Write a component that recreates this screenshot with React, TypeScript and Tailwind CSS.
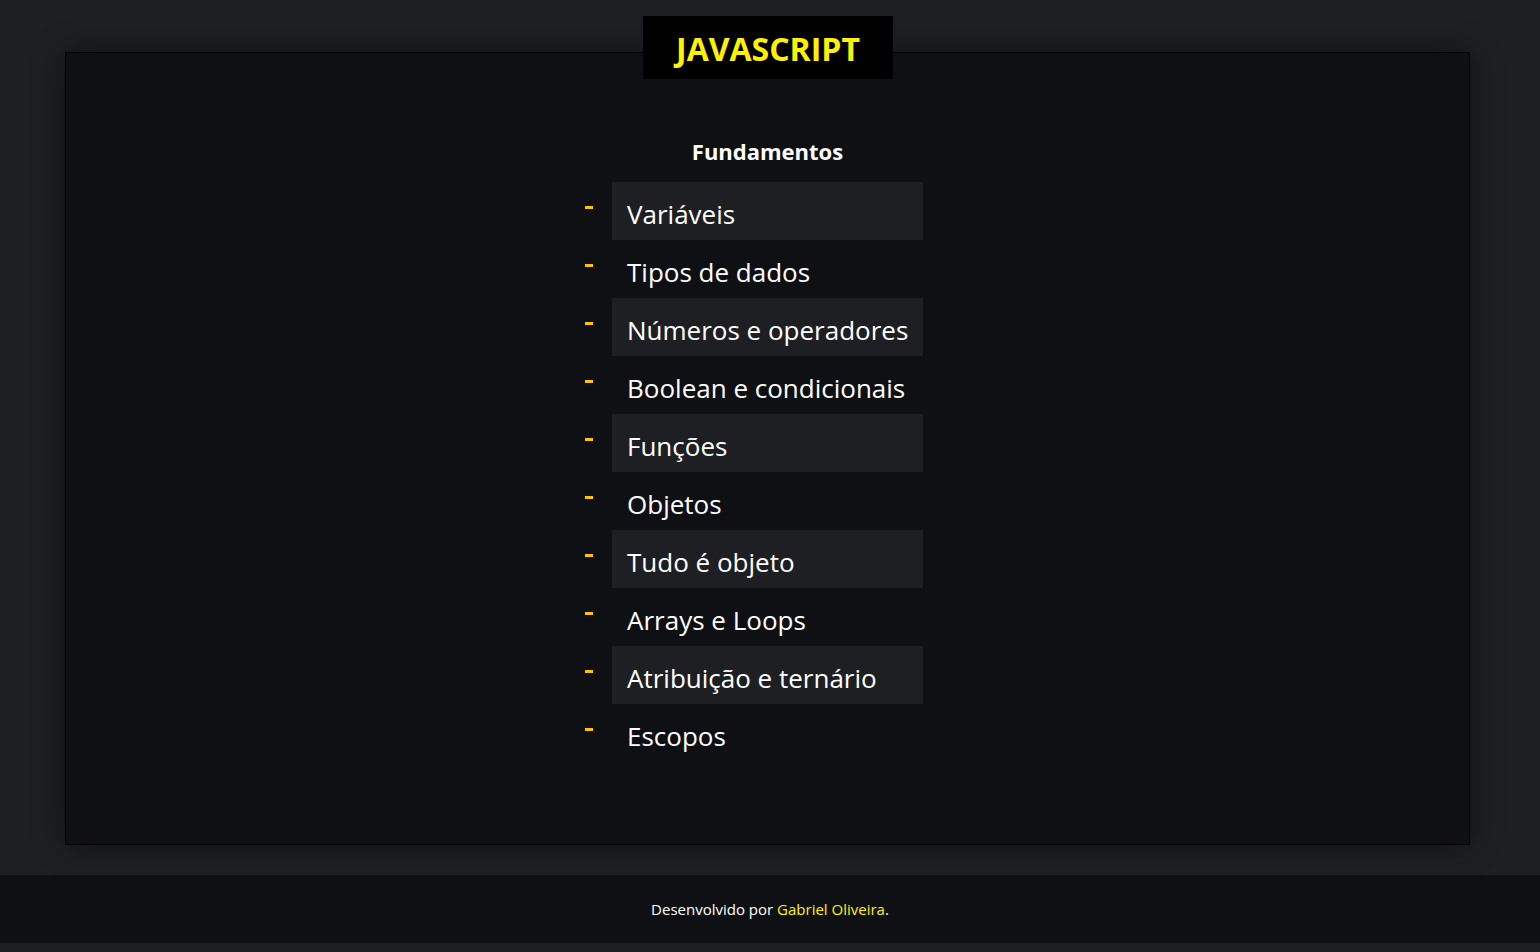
import React from "react";

const items = [
  "Variáveis",
  "Tipos de dados",
  "Números e operadores",
  "Boolean e condicionais",
  "Funções",
  "Objetos",
  "Tudo é objeto",
  "Arrays e Loops",
  "Atribuição e ternário",
  "Escopos",
];

export default function App() {
  return (
    <div
      className="min-h-[952px] bg-[#1e1f23] text-white"
      style={{ fontFamily: '"Open Sans", "Noto Sans", sans-serif' }}
    >
      <div className="pt-[16px]">
        <div className="relative z-10 ml-[643px] flex h-[63px] w-[250px] items-center justify-center bg-black pt-[2px]">
          <span className="text-[32px] font-bold leading-none text-[#fff200]">JAVASCRIPT</span>
        </div>
        <div className="ml-[65px] mt-[-27px] h-[793px] w-[1405px] border border-black bg-[#0f1014] shadow-[0_0_30px_rgba(0,0,0,0.45)]">
          <div className="pt-[84px] text-center text-[22px] font-bold leading-[28px]">Fundamentos</div>
          <ul className="mt-[17px] flex flex-col items-center">
            {items.map((t, i) => (
              <li
                key={t}
                className={`relative flex h-[58px] w-[311px] items-center pl-[15px] pt-[7px] text-[26px] ${
                  i % 2 === 0 ? "bg-[#1e1f23]" : ""
                }`}
              >
                <span className="absolute left-[-27px] top-[24px] h-[3px] w-[8px] bg-[#ffc400]" />
                {t}
              </li>
            ))}
          </ul>
        </div>
      </div>
      <footer className="mt-[30px] flex h-[68px] items-center justify-center bg-[#0f1014] text-[15px]">
        <span>
          Desenvolvido por <span className="text-[#fff200]">Gabriel Oliveira</span>.
        </span>
      </footer>
      <div className="h-[9px]" />
    </div>
  );
}
